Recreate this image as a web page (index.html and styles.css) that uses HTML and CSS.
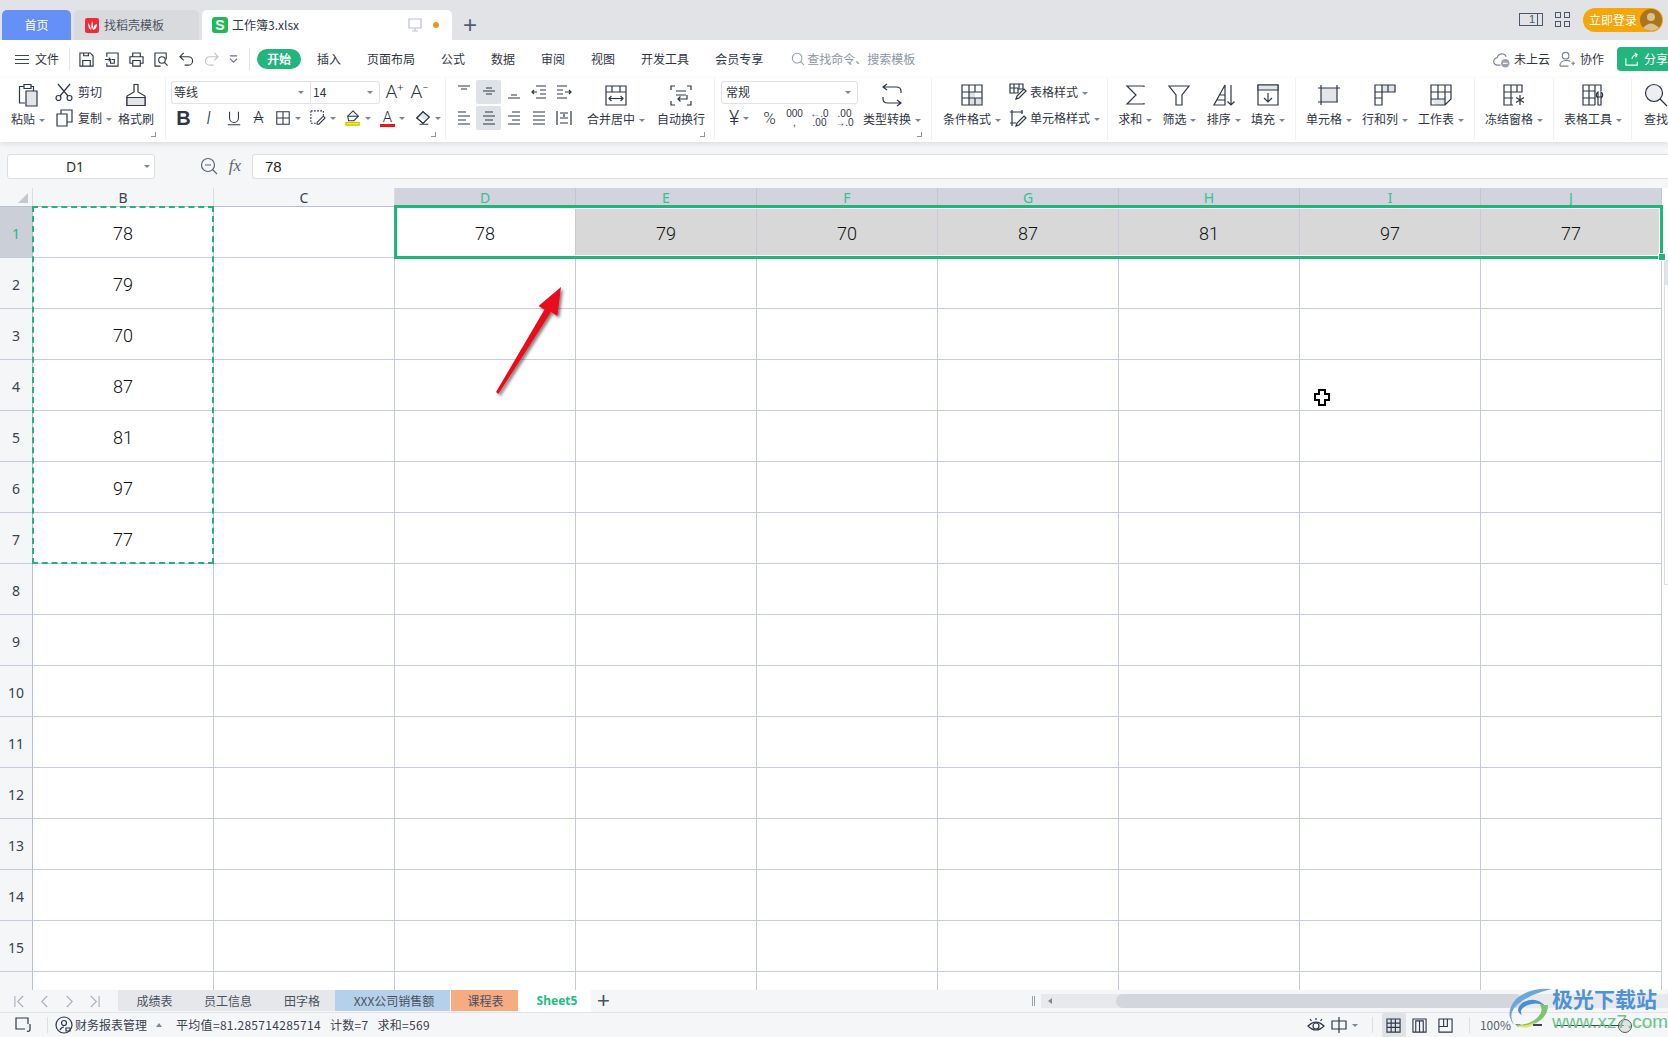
FILE: index.html
```html
<!DOCTYPE html>
<html lang="zh-CN">
<head>
<meta charset="utf-8">
<title>工作簿3.xlsx</title>
<link rel="stylesheet" href="styles.css">
</head>
<body>
<svg class="sprite" aria-hidden="true">
  <symbol id="save" viewBox="0 0 16 16"><path d="M1 1h11l3 3v11H1z"/><path d="M4 15V9h8v6M5 1v3h5V1"/></symbol>
  <symbol id="saveas" viewBox="0 0 16 16"><path d="M3 5V1h12v14H3v-3"/><path d="M1 8h6M5 6l2 2-2 2"/><path d="M8 8h3v4H7V9"/></symbol>
  <symbol id="print" viewBox="0 0 16 16"><path d="M4 5V1h8v4M4 12H1V5h14v7h-3"/><path d="M4 9h8v6H4z"/></symbol>
  <symbol id="preview" viewBox="0 0 16 16"><path d="M7 15H1V1h12v7"/><circle cx="8.5" cy="8.5" r="3.5"/><path d="M11 11l3.5 3.5"/></symbol>
  <symbol id="undo" viewBox="0 0 16 16"><path d="M5 1L1 5l4 4M1 5h9a4.500 4.500 0 0 1 0 9H6"/></symbol>
  <symbol id="redo" viewBox="0 0 16 16"><path d="M11 1l4 4-4 4M15 5H6a4.500 4.500 0 0 0 0 9h4"/></symbol>
  <symbol id="chev" viewBox="0 0 10 10"><path d="M1 1h8M1 4l4 4 4-4"/></symbol>
  <symbol id="paste" viewBox="0 0 24 24"><path d="M8 3.500H3.500V20H9M15 3.500h2.500V8"/><path d="M8 1.500h7v4H8z"/><path d="M10 8h11v15H10z" fill="#e3e5e8"/></symbol>
  <symbol id="cut" viewBox="0 0 18 18"><circle cx="3.500" cy="15" r="2.500"/><circle cx="14.500" cy="15" r="2.500"/><path d="M5 13L15 1M13 13L3 1"/></symbol>
  <symbol id="copy" viewBox="0 0 18 18"><path d="M6 5V1h11v12h-5"/><path d="M2 5h10v12H2z"/></symbol>
  <symbol id="brush" viewBox="0 0 24 24"><path d="M10 1.500h4V9l7 4v9.500H3V13l7-4z"/><path d="M3 14.500h18v8H3z" fill="#e3e5e8"/></symbol>
  <symbol id="under" viewBox="0 0 18 18"><path d="M4 2v7a5 5 0 0 0 10 0V2M2 16.500h14"/></symbol>
  <symbol id="border" viewBox="0 0 18 18"><path d="M2 2h14v14H2zM9 2v14M2 9h14"/></symbol>
  <symbol id="cellfmt" viewBox="0 0 18 18"><path d="M1 1h14v6M1 1v14h7" stroke-dasharray="2 1.500"/><path d="M8 14l7-7 2 2-7 7H8z"/></symbol>
  <symbol id="bucket" viewBox="0 0 18 18"><path d="M9 1l6 6-5 5H4L3 7z" /><path d="M3 7h12"/><path d="M1 14h15v3H1z" fill="#fff200" stroke="#c8c000"/></symbol>
  <symbol id="eraser" viewBox="0 0 18 18"><path d="M9 2l7 6-7 7-7-6z" fill="#fff"/><path d="M2 9l7-7 7 6-4 4-7-7" fill="#e3e5e8" stroke="none"/><path d="M9 2l7 6-7 7-7-6zM5 16h10"/></symbol>
  <symbol id="a1" viewBox="0 0 16 16"><path d="M2 2h12M5 5h6"/></symbol>
  <symbol id="a2" viewBox="0 0 16 16"><path d="M2 7h12M5 10h6M5 4h6"/></symbol>
  <symbol id="a3" viewBox="0 0 16 16"><path d="M5 11h6M2 14h12"/></symbol>
  <symbol id="a4" viewBox="0 0 16 16"><path d="M5 2h10M9 6h6M9 10h6M5 14h10M1 8h5M3 6L1 8l2 2"/></symbol>
  <symbol id="a5" viewBox="0 0 16 16"><path d="M1 2h10M1 6h6M1 10h6M1 14h10M9 8h6M13 6l2 2-2 2"/></symbol>
  <symbol id="b1" viewBox="0 0 16 16"><path d="M2 2h8M2 6h12M2 10h8M2 14h12"/></symbol>
  <symbol id="b2" viewBox="0 0 16 16"><path d="M4 2h8M2 6h12M4 10h8M2 14h12"/></symbol>
  <symbol id="b3" viewBox="0 0 16 16"><path d="M6 2h8M2 6h12M6 10h8M2 14h12"/></symbol>
  <symbol id="b4" viewBox="0 0 16 16"><path d="M2 2h12M2 6h12M2 10h12M2 14h12"/></symbol>
  <symbol id="b5" viewBox="0 0 16 16"><path d="M1 1v14M15 1v14M4 3h8M4 8h8M4 13h8M8 4v3"/></symbol>
  <symbol id="merge" viewBox="0 0 24 24"><path d="M2 3h20v19H2zM2 9h20M8 3v6M16 3v6"/><path d="M5 15.500h14M7.500 13L5 15.500 7.500 18M16.500 13l2.500 2.500-2.500 2.500"/></symbol>
  <symbol id="wrap" viewBox="0 0 24 24"><path d="M6 3H2v4M18 3h4v4M2 18v4h4M22 18v4h-4M7 8h10M7 12h10M18 12v4H9M11.500 13.500L9 16l2.500 2.500"/></symbol>
  <symbol id="convert" viewBox="0 0 24 24"><path d="M7 1L3 4l4 3M3 4h13q5 0 5 4v2M17 17l4 3-4 3M21 20H8q-5 0-5-4v-2"/></symbol>
  <symbol id="cond" viewBox="0 0 24 24"><path d="M9 9h6v6h6v7H9z" fill="#dfe1e5" stroke="none"/><path d="M2 2h20v20H2zM2 9h7V2M9 9v13M2 15h20M15 2v7M9 9h13M15 15v7"/></symbol>
  <symbol id="tstyle" viewBox="0 0 18 18"><path d="M1 1h13v5H9v4H1zM5 1v9M10 1v5M1 5h8"/><path d="M7 16l1-3 7-7 2 2-7 7z"/></symbol>
  <symbol id="cstyle" viewBox="0 0 18 18"><path d="M1 3h13M3 1v16M1 14h6M13 1v4"/><path d="M7 17l1-3 7-7 2 2-7 7z"/></symbol>
  <symbol id="sum" viewBox="0 0 24 24"><path d="M21 4V3H4l9 9-9 9h17v-1"/></symbol>
  <symbol id="filter" viewBox="0 0 24 24"><path d="M2 3h20l-7 9v10H9V12z"/></symbol>
  <symbol id="sort" viewBox="0 0 24 24"><path d="M13 2L2 22h11zM5 17h8M8 12h5M19 2v20M15.500 18.500L19 22l3.500-3.500"/></symbol>
  <symbol id="fillico" viewBox="0 0 24 24"><path d="M2 2h20v20H2z"/><path d="M2 2h20v5H2z" fill="#e3e5e8"/><path d="M12 10v9M8 15l4 4 4-4"/></symbol>
  <symbol id="cell" viewBox="0 0 24 24"><path d="M4 5h16v14H4z" fill="#e3e5e8" stroke="none"/><path d="M1 5h22M1 19h20M4 2v20M20 2v17"/></symbol>
  <symbol id="rowcol" viewBox="0 0 24 24"><path d="M8 2h7v7H8z" fill="#e3e5e8" stroke="none"/><path d="M15 2h7v7h-7z" fill="#e3e5e8" stroke="none"/><path d="M2 2h20v7H9v13H2zM2 9h7M9 2v7M15 2v7M2 15h7"/></symbol>
  <symbol id="sheeticon" viewBox="0 0 24 24"><path d="M2 16h14v6H7z" fill="#e3e5e8" stroke="none"/><path d="M2 2h20v14l-6 6H2zM2 9h20M2 16h14v6M9 2v14M16 2v14"/></symbol>
  <symbol id="freeze" viewBox="0 0 24 24"><path d="M2 2h18v7H2zM2 9v13h9M2 15h9M9 2v20M15 2v7M2 9h7v6H2z"/><path d="M18 12v10M14 14.500l8 5M22 14.500l-8 5"/></symbol>
  <symbol id="ttools" viewBox="0 0 24 24"><path d="M14 22H2V2h18v6M2 8h12M2 15h12M8 2v20M14 2v20"/><path d="M17 9v5h3V9a3.500 3.500 0 0 1 0 6v7h-3v-7a3.500 3.500 0 0 1 0-6z"/></symbol>
  <symbol id="find" viewBox="0 0 24 24"><circle cx="10" cy="10" r="8.500" fill="#eceef1"/><path d="M16 16l7 7"/></symbol>
  <symbol id="glass" viewBox="0 0 16 16"><circle cx="7" cy="7" r="5.500"/><path d="M11 11l4 4"/></symbol>
  <symbol id="zoomout" viewBox="0 0 18 18"><circle cx="8" cy="8" r="6.500"/><path d="M5 8h6M12.500 12.500L17 17"/></symbol>
  <symbol id="monitor" viewBox="0 0 14 14"><path d="M1 1h12v9H1zM7 10v3M4 13h6"/></symbol>
  <symbol id="cloud" viewBox="0 0 18 18"><path d="M8 15H5a4 4 0 0 1-.5-8A5 5 0 0 1 14 6"/><circle cx="13" cy="13" r="4.500" fill="#9aa2b1" stroke="none"/><path d="M10.500 13h5" stroke="#fff"/></symbol>
  <symbol id="person" viewBox="0 0 18 18"><circle cx="7" cy="5" r="3.500"/><path d="M1 16c0-4 3-6 6-6h2c1 0 2 .5 3 1M1 16h9M13 13h4M15 11v4"/></symbol>
  <symbol id="share" viewBox="0 0 16 16"><path d="M1 7v8h13v-4M8 8c0-3 3-5 6-5M11 1l3 2-2 3"/></symbol>
  <symbol id="first" viewBox="0 0 12 14"><path d="M1 1v12M10 1L4 7l6 6"/></symbol>
  <symbol id="prev" viewBox="0 0 12 14"><path d="M9 1L3 7l6 6"/></symbol>
  <symbol id="next" viewBox="0 0 12 14"><path d="M3 1l6 6-6 6"/></symbol>
  <symbol id="last" viewBox="0 0 12 14"><path d="M11 1v12M2 1l6 6-6 6"/></symbol>
  <symbol id="screen" viewBox="0 0 18 18"><path d="M10 13H1V2h12v6M15 8v6a2 2 0 0 1-3 1"/></symbol>
  <symbol id="finance" viewBox="0 0 18 18"><circle cx="9" cy="9" r="8"/><circle cx="9" cy="7" r="2.500"/><path d="M5 14c1-2 3-3 4-3M11 12h4v3h-4z"/></symbol>
  <symbol id="eye" viewBox="0 0 18 18"><path d="M1 10q8-8 16 0-8 8-16 0z"/><circle cx="9" cy="10" r="3"/><path d="M9 2v2M3 3l1.500 2M15 3l-1.500 2"/></symbol>
  <symbol id="ime" viewBox="0 0 18 18"><path d="M2 5h14v8H2zM9 1v16"/></symbol>
  <symbol id="vnorm" viewBox="0 0 16 16"><path d="M1 1h14v14H1zM1 5.500h14M1 10h14M5.500 1v14M10 1v14"/></symbol>
  <symbol id="vpage" viewBox="0 0 16 16"><path d="M1 1h14v14H1zM4 3h8v12H4zM8 3v12"/></symbol>
  <symbol id="vbreak" viewBox="0 0 16 16"><path d="M1 1h14v14H1zM6 1v8H1M6 9h4V1"/></symbol>
</svg>

<header class="tabs">
  <div class="tab tab-home">首页</div>
  <div class="tab tab-tpl">
    <svg class="logo-tpl" viewBox="0 0 14 15"><rect width="14" height="15" rx="2" fill="#ef2b3a"/><path d="M3 5q0 5 2.500 7Q6.500 9 3 5zM7 3q-1.500 5 0 9 2-4 0-9zM12 6q-4 1-4 6 4-1 4-6z" fill="#fff"/></svg>
    <span>找稻壳模板</span>
  </div>
  <div class="tab tab-doc">
    <span class="logo-s">S</span>
    <span class="doc-name">工作簿3.xlsx</span>
    <svg class="monitor"><use href="#monitor"/></svg>
    <i class="dot"></i>
  </div>
  <div class="tab-add">+</div>
  <div class="tabs-right">
    <div class="page-ico"><span>1</span><i></i></div>
    <div class="grid-ico"><i></i><i></i><i></i><i></i></div>
    <div class="login"><span>立即登录</span><svg class="avatar" viewBox="0 0 22 22"><circle cx="11" cy="11" r="11" fill="#a8761e"/><circle cx="11" cy="8" r="4" fill="#dcc08f"/><path d="M3 19q8-9 16 0-8 6-16 0z" fill="#dcc08f"/></svg></div>
  </div>
</header>

<nav class="quick">
  <div class="menu-ico"><i></i><i></i><i></i></div>
  <span class="file">文件</span>
  <i class="qsep"></i>
  <div class="qicons">
    <svg class="q"><use href="#save"/></svg>
    <svg class="q"><use href="#saveas"/></svg>
    <svg class="q"><use href="#print"/></svg>
    <svg class="q"><use href="#preview"/></svg>
    <svg class="q"><use href="#undo"/></svg>
    <svg class="q q-off"><use href="#redo"/></svg>
    <svg class="q q-chev"><use href="#chev"/></svg>
  </div>
  <i class="qsep qsep2"></i>
  <span class="pill">开始</span>
  <div class="menu">
    <span>插入</span><span>页面布局</span><span>公式</span><span>数据</span><span>审阅</span><span>视图</span><span>开发工具</span><span>会员专享</span>
  </div>
  <div class="search"><svg class="glass"><use href="#glass"/></svg><span>查找命令、搜索模板</span></div>
  <div class="quick-right">
    <svg class="qr"><use href="#cloud"/></svg><span class="qr-t1">未上云</span>
    <svg class="qr qr2"><use href="#person"/></svg><span class="qr-t2">协作</span>
    <div class="share"><svg class="share-ico"><use href="#share"/></svg><span>分享</span></div>
  </div>
</nav>

<section class="ribbon">
  <div class="group g-clip">
    <div class="big w-paste"><svg class="ico"><use href="#paste"/></svg><span>粘贴<i class="caret"></i></span></div>
    <div class="stack w-clip">
      <div class="small"><svg class="ico18"><use href="#cut"/></svg><span>剪切</span></div>
      <div class="small"><svg class="ico18"><use href="#copy"/></svg><span>复制<i class="caret"></i></span></div>
    </div>
    <div class="big w-brush"><svg class="ico"><use href="#brush"/></svg><span>格式刷</span></div>
    <i class="corner"></i>
  </div>

  <div class="group g-font">
    <div class="stack">
      <div class="row">
        <div class="combo combo-font"><span>等线</span><i class="caret"></i></div>
        <div class="combo combo-size"><span>14</span><i class="caret"></i></div>
        <div class="cell25 glyph">A<sup>+</sup></div>
        <div class="cell25 glyph">A<sup>−</sup></div>
      </div>
      <div class="row row2">
        <div class="cell25 bold">B</div>
        <div class="cell25 ital">I</div>
        <div class="cell25"><svg class="ico16"><use href="#under"/></svg></div>
        <div class="cell25 strike">A</div>
        <div class="cell35"><svg class="ico16"><use href="#border"/></svg><i class="caret"></i></div>
        <div class="cell35"><svg class="ico16"><use href="#cellfmt"/></svg><i class="caret"></i></div>
        <div class="cell35"><svg class="ico16"><use href="#bucket"/></svg><i class="caret"></i></div>
        <div class="cell35"><span class="color-a">A</span><i class="caret"></i></div>
        <div class="cell35"><svg class="ico16"><use href="#eraser"/></svg><i class="caret"></i></div>
      </div>
    </div>
    <i class="corner"></i>
  </div>

  <div class="group g-align">
    <div class="align-grid">
      <div class="cell25"><svg class="ico16"><use href="#a1"/></svg></div>
      <div class="cell25 on"><svg class="ico16"><use href="#a2"/></svg></div>
      <div class="cell25"><svg class="ico16"><use href="#a3"/></svg></div>
      <div class="cell25"><svg class="ico16"><use href="#a4"/></svg></div>
      <div class="cell25"><svg class="ico16"><use href="#a5"/></svg></div>
      <div class="cell25"><svg class="ico16"><use href="#b1"/></svg></div>
      <div class="cell25 on"><svg class="ico16"><use href="#b2"/></svg></div>
      <div class="cell25"><svg class="ico16"><use href="#b3"/></svg></div>
      <div class="cell25"><svg class="ico16"><use href="#b4"/></svg></div>
      <div class="cell25"><svg class="ico16"><use href="#b5"/></svg></div>
    </div>
    <div class="big w-merge"><svg class="ico"><use href="#merge"/></svg><span>合并居中<i class="caret"></i></span></div>
    <div class="big w-wrap"><svg class="ico"><use href="#wrap"/></svg><span>自动换行</span></div>
    <i class="corner"></i>
  </div>

  <div class="group g-num">
    <div class="stack">
      <div class="row"><div class="combo combo-num"><span>常规</span><i class="caret"></i></div></div>
      <div class="row row2">
        <div class="cell36"><span class="yen">¥</span><i class="caret"></i></div>
        <div class="cell25 pct">%</div>
        <div class="cell25 tiny">000<br>,</div>
        <div class="cell25 tiny">←.0<br>.00</div>
        <div class="cell25 tiny">.00<br>→.0</div>
      </div>
    </div>
    <div class="big w-conv"><svg class="ico"><use href="#convert"/></svg><span>类型转换<i class="caret"></i></span></div>
    <i class="corner"></i>
  </div>

  <div class="group g-style">
    <div class="big w-cond"><svg class="ico"><use href="#cond"/></svg><span>条件格式<i class="caret"></i></span></div>
    <div class="stack">
      <div class="small small-style"><svg class="ico18"><use href="#tstyle"/></svg><span>表格样式<i class="caret"></i></span></div>
      <div class="small small-style"><svg class="ico18"><use href="#cstyle"/></svg><span>单元格样式<i class="caret"></i></span></div>
    </div>
  </div>

  <div class="group g-edit">
    <div class="big w-edit"><svg class="ico"><use href="#sum"/></svg><span>求和<i class="caret"></i></span></div>
    <div class="big w-edit"><svg class="ico"><use href="#filter"/></svg><span>筛选<i class="caret"></i></span></div>
    <div class="big w-edit"><svg class="ico"><use href="#sort"/></svg><span>排序<i class="caret"></i></span></div>
    <div class="big w-edit"><svg class="ico"><use href="#fillico"/></svg><span>填充<i class="caret"></i></span></div>
  </div>

  <div class="group g-cells">
    <div class="big w-cells"><svg class="ico"><use href="#cell"/></svg><span>单元格<i class="caret"></i></span></div>
    <div class="big w-cells"><svg class="ico"><use href="#rowcol"/></svg><span>行和列<i class="caret"></i></span></div>
    <div class="big w-cells"><svg class="ico"><use href="#sheeticon"/></svg><span>工作表<i class="caret"></i></span></div>
  </div>

  <div class="group g-freeze"><div class="big w-wide"><svg class="ico"><use href="#freeze"/></svg><span>冻结窗格<i class="caret"></i></span></div></div>
  <div class="group g-tools"><div class="big w-wide"><svg class="ico"><use href="#ttools"/></svg><span>表格工具<i class="caret"></i></span></div></div>
  <div class="group g-find"><div class="big w-find"><svg class="ico"><use href="#find"/></svg><span>查找</span></div></div>
</section>

<section class="formula">
  <div class="namebox"><span>D1</span><i class="caret"></i></div>
  <svg class="fz"><use href="#zoomout"/></svg>
  <span class="fx">fx</span>
  <div class="input">78</div>
</section>

<main class="sheet">
  <table class="table">
    <colgroup><col class="col-h"><col class="col-c"><col class="col-c"><col class="col-c"><col class="col-c"><col class="col-c"><col class="col-c"><col class="col-c"><col class="col-c"><col class="col-c"></colgroup>
    <thead>
      <tr><th class="corner-h"><i class="tri"></i></th><th>B</th><th>C</th><th class="hl">D</th><th class="hl">E</th><th class="hl">F</th><th class="hl">G</th><th class="hl">H</th><th class="hl">I</th><th class="hl">J</th></tr>
    </thead>
    <tbody>
      <tr><th class="hl-row">1</th><td>78</td><td></td><td>78</td><td class="sel">79</td><td class="sel">70</td><td class="sel">87</td><td class="sel">81</td><td class="sel">97</td><td class="sel">77</td></tr>
      <tr><th>2</th><td>79</td><td></td><td></td><td></td><td></td><td></td><td></td><td></td><td></td></tr>
      <tr><th>3</th><td>70</td><td></td><td></td><td></td><td></td><td></td><td></td><td></td><td></td></tr>
      <tr><th>4</th><td>87</td><td></td><td></td><td></td><td></td><td></td><td></td><td></td><td></td></tr>
      <tr><th>5</th><td>81</td><td></td><td></td><td></td><td></td><td></td><td></td><td></td><td></td></tr>
      <tr><th>6</th><td>97</td><td></td><td></td><td></td><td></td><td></td><td></td><td></td><td></td></tr>
      <tr><th>7</th><td>77</td><td></td><td></td><td></td><td></td><td></td><td></td><td></td><td></td></tr>
      <tr><th>8</th><td></td><td></td><td></td><td></td><td></td><td></td><td></td><td></td><td></td></tr>
      <tr><th>9</th><td></td><td></td><td></td><td></td><td></td><td></td><td></td><td></td><td></td></tr>
      <tr><th>10</th><td></td><td></td><td></td><td></td><td></td><td></td><td></td><td></td><td></td></tr>
      <tr><th>11</th><td></td><td></td><td></td><td></td><td></td><td></td><td></td><td></td><td></td></tr>
      <tr><th>12</th><td></td><td></td><td></td><td></td><td></td><td></td><td></td><td></td><td></td></tr>
      <tr><th>13</th><td></td><td></td><td></td><td></td><td></td><td></td><td></td><td></td><td></td></tr>
      <tr><th>14</th><td></td><td></td><td></td><td></td><td></td><td></td><td></td><td></td><td></td></tr>
      <tr><th>15</th><td></td><td></td><td></td><td></td><td></td><td></td><td></td><td></td><td></td></tr>
      <tr><th></th><td></td><td></td><td></td><td></td><td></td><td></td><td></td><td></td><td></td></tr>
    </tbody>
  </table>
  <div class="vbar"><i></i></div>
  <div class="copy-range"></div>
  <div class="select-range"><i class="handle"></i></div>
  <svg class="arrow" viewBox="0 0 90 130">
    <defs><filter id="sh" x="-30%" y="-30%" width="160%" height="160%"><feDropShadow dx="2" dy="2" stdDeviation="1.500" flood-color="#000" flood-opacity=".5"/></filter></defs>
    <path d="M6 113L8.500 115 61 33 67.500 37 71 8 48.500 27 54.500 30.500z" fill="#e8101a" filter="url(#sh)"/>
  </svg>
  <svg class="cursor" viewBox="0 0 16 17"><path d="M5 1h6v4h4v6h-4v5H5v-5H1V5h4z" fill="#fff" stroke="#000" stroke-width="2"/></svg>
</main>

<section class="sheets">
  <div class="nav">
    <svg class="nav-i"><use href="#first"/></svg>
    <svg class="nav-i"><use href="#prev"/></svg>
    <svg class="nav-i"><use href="#next"/></svg>
    <svg class="nav-i"><use href="#last"/></svg>
  </div>
  <div class="st st1">成绩表</div>
  <div class="st st2">员工信息</div>
  <div class="st st3">田字格</div>
  <div class="st st4">XXX公司销售额</div>
  <div class="st st5">课程表</div>
  <div class="st st6">Sheet5</div>
  <div class="st-add">+</div>
  <div class="splitter"></div>
  <div class="hbar"><i class="harrow"></i><i class="hthumb"></i></div>
</section>

<footer class="status">
  <svg class="s-ico s-screen"><use href="#screen"/></svg>
  <i class="s-sep"></i>
  <svg class="s-ico s-fin"><use href="#finance"/></svg>
  <span class="s-fin-t">财务报表管理</span>
  <i class="s-up"></i>
  <span class="s-avg">平均值=81.285714285714</span>
  <span class="s-cnt">计数=7</span>
  <span class="s-sum">求和=569</span>
  <div class="s-right">
    <svg class="s-ico"><use href="#eye"/></svg>
    <svg class="s-ico s-ime"><use href="#ime"/></svg><i class="caret"></i>
    <i class="s-sep s-sep2"></i>
    <div class="view on"><svg class="v-ico"><use href="#vnorm"/></svg></div>
    <div class="view"><svg class="v-ico"><use href="#vpage"/></svg></div>
    <div class="view"><svg class="v-ico"><use href="#vbreak"/></svg></div>
    <i class="s-sep s-sep3"></i>
    <span class="s-zoom">100%</span><i class="caret"></i>
    <i class="s-minus"></i>
    <div class="slider"><i></i></div>
  </div>
</footer>

<div class="watermark">
  <svg class="wm-logo" viewBox="0 0 46 42">
    <path d="M44 2Q22 0 8 12 -4 26 6 38 -2 24 14 14 26 6 44 2z" fill="#6aa8dc"/>
    <path d="M38 20Q28 8 14 16 6 24 14 28 10 22 20 18 30 14 38 20z" fill="#4a8fcf"/>
    <path d="M40 18Q40 30 28 36 18 42 8 38 22 38 30 30 36 24 32 18z" fill="#7dc66f"/>
    <path d="M8 38Q20 40 28 34L22 40Q14 42 8 38z" fill="#e8e46a"/>
  </svg>
  <div class="wm-text"><b>极光下载站</b><span>www.xz7.com</span></div>
</div>
</body>
</html>
```

FILE: styles.css
```css
* { box-sizing: border-box; }
html, body { margin: 0; padding: 0; }
body {
  width: 1668px; height: 1037px; overflow: hidden; position: relative;
  background: #f5f6f8; color: #3a4150;
  font: 12px/18px "Noto Sans CJK SC", "Noto Sans", sans-serif;
}
i { font-style: normal; }
.sprite { display: none; }
svg { display: block; flex: none; fill: none; stroke: #2d3748; stroke-width: 1.2; }
.caret {
  display: inline-block; flex: none; width: 0; height: 0; margin-left: 4px; vertical-align: middle;
  border-left: 3px solid transparent; border-right: 3px solid transparent; border-top: 3.5px solid #7f8695;
}

/* window tabs */
.tabs { display: flex; height: 40px; padding: 10px 5px 0 2px; background: #e2e3e7; }
.tab { display: flex; align-items: center; height: 30px; border-radius: 5px 5px 0 0; }
.tab-home { width: 69px; justify-content: center; background: #6590f7; color: #fff; }
.tab-tpl { width: 125px; margin-left: 3px; padding-left: 11px; background: #d9dade; color: #4c5362; }
.logo-tpl { width: 14px; height: 15px; margin-right: 5px; stroke: none; }
.tab-doc { width: 250px; margin-left: 3px; padding-left: 10px; background: #fff; color: #2f3644; }
.logo-s {
  display: flex; align-items: center; justify-content: center; width: 16px; height: 16px; border-radius: 3px;
  background: #21b957; color: #fff; font: bold 14px/16px "Liberation Sans", sans-serif;
}
.doc-name { width: 176px; margin-left: 4px; }
.monitor { width: 14px; height: 14px; stroke: #bcc2cc; }
.dot { width: 6px; height: 6px; margin-left: 11px; border-radius: 50%; background: #ea9a13; }
.tab-add { width: 36px; text-align: center; font: 24px/30px "Liberation Sans", sans-serif; color: #525c70; }
.tabs-right { display: flex; margin-left: auto; margin-top: -2px; align-items: flex-start; }
.page-ico {
  display: flex; justify-content: flex-end; align-items: flex-end; width: 24px; height: 13px; margin-top: 5px;
  border: 1px solid #4d566a; color: #4d566a; font: 11px/11px "Liberation Sans", sans-serif;
}
.page-ico span { margin-right: 2px; }
.page-ico i { width: 6px; height: 13px; margin: -1px -1px -1px 0; border: 1px solid #4d566a; }
.grid-ico { display: grid; grid-template-columns: 6px 6px; gap: 3px; margin: 4px 0 0 12px; }
.grid-ico i { height: 6px; border: 1px solid #4d566a; }
.login {
  display: flex; align-items: center; width: 80px; height: 24px; margin: 0 0 0 13px; padding: 0 1px 0 6px;
  border-radius: 12px; background: #f5a60b; color: #fff;
}
.avatar { width: 22px; height: 22px; margin-left: auto; stroke: none; }

/* quick bar */
.quick { display: flex; align-items: center; height: 38px; background: #fff; padding-left: 15px; color: #2f3644; }
.menu-ico { display: grid; gap: 3px; width: 14px; }
.menu-ico i { height: 1px; background: #3f4859; }
.file { margin-left: 6px; }
.qsep { width: 1px; height: 22px; margin-left: 10px; background: #e1e3e8; }
.qicons { display: flex; gap: 10px; margin-left: 9px; align-items: center; }
.q { width: 15px; height: 15px; }
.q-off { stroke: #bfc3ca; }
.q-chev { width: 9px; height: 9px; stroke: #6a7282; }
.qsep2 { margin-left: 11px; }
.pill {
  width: 44px; height: 20px; margin-left: 7px; border-radius: 10px; text-align: center; line-height: 20px;
  background: #22b57c; color: #fff; font-weight: 700;
}
.menu { display: flex; gap: 26px; margin-left: 16px; }
.search { display: flex; align-items: center; gap: 2px; margin-left: 28px; color: #8d95a6; }
.glass { width: 14px; height: 14px; stroke: #97a0b0; }
.quick-right { display: flex; align-items: center; margin-left: auto; }
.qr { width: 17px; height: 17px; stroke: #7b8392; }
.qr-t1 { margin-left: 4px; }
.qr2 { margin-left: 9px; }
.qr-t2 { margin-left: 4px; }
.share {
  display: flex; align-items: center; width: 51px; height: 24px; margin-left: 13px; padding-left: 8px;
  border-radius: 4px 0 0 4px; background: #22b57c; color: #fff; overflow: hidden; white-space: nowrap;
}
.share-ico { width: 14px; height: 14px; margin-right: 5px; stroke: #fff; }

/* ribbon */
.ribbon { display: flex; height: 64px; background: #fff; box-shadow: 0 2px 5px rgba(40, 50, 70, .12); position: relative; z-index: 1; color: #2f3644; overflow: hidden; }
.group { display: flex; flex: none; height: 62px; padding-top: 2px; border-right: 1px solid #eef0f2; position: relative; }
.g-clip { width: 166px; padding-left: 6px; }
.g-font { width: 280px; padding-left: 5px; }
.g-align { width: 269px; padding-left: 5px; }
.g-num { width: 217px; padding-left: 6px; }
.g-style { width: 176px; padding-left: 10px; }
.g-edit { width: 188px; padding-left: 5px; }
.g-cells { width: 179px; padding-left: 5px; }
.g-freeze { width: 79px; }
.g-tools { width: 78px; }
.g-find { width: 36px; border-right: 0; }
.big { display: flex; flex-direction: column; align-items: center; flex: none; padding-top: 3px; white-space: nowrap; }
.big > span { margin-top: 3px; }
.ico { width: 24px; height: 24px; }
.ico18 { width: 18px; height: 18px; }
.ico16 { width: 16px; height: 16px; }
.w-paste { width: 44px; }
.w-clip { width: 62px; }
.w-brush { width: 48px; }
.w-merge { width: 60px; margin-left: 10px; }
.w-wrap { width: 60px; margin-left: 5px; }
.w-conv { width: 60px; margin-left: 4px; }
.w-cond { width: 60px; }
.w-edit { width: 44.3px; }
.w-cells { width: 56px; }
.w-wide { width: 78px; }
.w-find { width: 48px; }
.stack { display: flex; flex-direction: column; gap: 2px; }
.small { display: flex; align-items: center; gap: 5px; height: 24px; padding-left: 5px; white-space: nowrap; }
.small-style { padding-left: 0; margin-left: 7px; gap: 3px; }
.row { display: flex; height: 24px; align-items: center; }
.combo {
  display: flex; align-items: center; justify-content: space-between; height: 23px; padding: 0 6px 0 2px;
  border: 1px solid #e0e2e7; background: #fff;
}
.combo-font { width: 139px; border-radius: 3px 0 0 3px; border-right: 0; }
.combo-size { width: 70px; border-radius: 0 3px 3px 0; margin-right: 2px; }
.combo-num { width: 137px; border-radius: 3px; padding: 0 6px 0 4px; }
.cell25 { display: flex; align-items: center; justify-content: center; flex: none; width: 25px; height: 24px; }
.cell35 { display: flex; align-items: center; flex: none; width: 35px; height: 24px; padding-left: 4px; }
.cell36 { display: flex; align-items: center; flex: none; width: 36px; height: 24px; padding-left: 8px; }
.glyph { font: 300 19px/24px Roboto, sans-serif; }
.glyph sup { font-size: 11px; line-height: 10px; margin-top: -8px; }
.bold { font: bold 20px/24px "Liberation Sans", sans-serif; }
.ital { font: italic 300 18px/24px Roboto, sans-serif; }
.strike { font: 300 16px/24px Roboto, sans-serif; text-decoration: line-through; }
.color-a { display: block; width: 15px; text-align: center; font: 300 15px/14px Roboto, sans-serif; border-bottom: 3px solid #f01414; }
.yen { font: 300 20px/24px Roboto, sans-serif; }
.pct { font: 300 17px/24px Roboto, sans-serif; }
.tiny { display: block; padding-top: 3px; text-align: center; font: 10px/9px "Liberation Sans", sans-serif; }
.on { background: #dfe2e6; border-radius: 2px; }
.align-grid { display: grid; grid-template-columns: repeat(5, 25px); grid-auto-rows: 24px; row-gap: 2px; height: 50px; }
.corner { position: absolute; right: 9px; bottom: 3px; width: 5px; height: 5px; border-right: 1px solid #8f96a3; border-bottom: 1px solid #8f96a3; }

/* formula bar */
.formula { display: flex; align-items: center; height: 46px; padding: 2px 0 0 7px; background: #f5f6f8; }
.namebox {
  display: flex; align-items: center; width: 148px; height: 25px; padding-right: 4px; border: 1px solid #dcdee3; border-radius: 3px;
  background: #fff; font: 14px/23px "Noto Sans", sans-serif; color: #333;
}
.namebox span { flex: 1; text-align: center; padding-left: 4px; padding-right: 2px; }
.fz { width: 18px; height: 18px; margin-left: 45px; stroke: #5d6575; }
.fx { width: 34px; text-align: center; font: italic 17px/20px "Liberation Serif", serif; color: #5d6575; }
.input {
  flex: 1; height: 25px; margin-right: -3px; padding-left: 12px; border: 1px solid #dcdee3; border-right: 0; border-radius: 3px 0 0 3px;
  background: #fff; font: 15px/23px "Liberation Sans", sans-serif; color: #222;
}

/* grid */
.sheet { position: relative; height: 802px; overflow: hidden; background: #fff; }
.table { table-layout: fixed; width: 1662px; border-collapse: separate; border-spacing: 0; background: #fff; }
.col-h { width: 33px; }
.col-c { width: 181px; }
.table th { padding: 0; font: 14px/18px "Noto Sans", sans-serif; color: #3a4150; background: #f5f6f8; }
.table thead th { height: 18px; padding-top: 2px; line-height: 16px; border-bottom: 1px solid #b8bfd0; border-right: 1px solid #dadde4; }
.corner-h { position: relative; }
.tri { position: absolute; right: 4px; bottom: 3px; width: 0; height: 0; border-left: 10px solid transparent; border-bottom: 10px solid #c5c8ce; }
.table thead th.hl { background: #d1d4dc; color: #38c08d; border-right-color: #c0c5d2; }
.table tbody th { height: 51px; padding-top: 4px; border-right: 1px solid #b8bfd0; border-bottom: 1px solid #c5cbdb; }
.table tbody th.hl-row { background: #cbcfd7; color: #2ab680; }
.table td {
  height: 51px; padding: 4px 0 0; text-align: center; border-right: 1px solid #c5cbdb; border-bottom: 1px solid #c5cbdb;
  font: 300 18px/20px Roboto, sans-serif; color: #111;
}
.table td.sel { background: #d8d8d8; }
.vbar { position: absolute; top: 70px; right: 0; width: 4px; height: 327px; border-left: 1px solid #dcdfe4; border-bottom: 1px solid #dcdfe4; }
.vbar i { display: block; height: 25px; margin-top: 2px; background: #e1e4e8; }
.copy-range { position: absolute; left: 32px; top: 18px; width: 182px; height: 358px; border: 2px dashed #21b57c; }
.select-range { position: absolute; left: 394px; top: 17px; width: 1269px; height: 54px; border: 3px solid #21b57c; box-shadow: inset 0 0 0 1px #fff; }
.handle { position: absolute; right: -5px; bottom: -4px; width: 6px; height: 6px; background: #21b57c; outline: 1px solid #fff; }
.arrow { position: absolute; left: 490px; top: 91px; width: 90px; height: 130px; stroke: none; }
.cursor { position: absolute; left: 1314px; top: 201px; width: 16px; height: 17px; stroke: none; }

/* sheet tabs */
.sheets { display: flex; height: 22px; background: #f5f6f8; position: relative; z-index: 1; }
.sheets > * { flex: none; }
.nav { display: flex; width: 118px; padding-left: 14px; gap: 14px; align-items: center; }
.nav-i { width: 11px; height: 13px; stroke: #a9afbb; }
.st { height: 21px; text-align: center; line-height: 21px; background: #e6e7eb; color: #4a5160; }
.st1 { width: 73px; }
.st2 { width: 74px; }
.st3 { width: 70px; padding-left: 4px; }
.st4 { width: 115px; margin-right: 1px; padding-left: 3px; background: #b5d0ea; }
.st5 { width: 67px; margin-right: 1px; padding-left: 2px; background: #f4ac80; }
.st6 { width: 72px; height: 22px; padding-left: 4px; background: #fff; color: #1cc07f; font-weight: 700; font-family: "Noto Sans", sans-serif; }
.st-add { width: 24px; padding-left: 1px; text-align: center; font: 22px/22px "Liberation Sans", sans-serif; color: #4a5160; }
.splitter { width: 3px; height: 10px; margin: 6px 0 0 417px; border-left: 1px solid #9aa1af; border-right: 1px solid #9aa1af; }
.hbar { display: flex; align-items: center; width: 627px; height: 14px; margin: 4px 0 0 6px; background: #e8e9ed; }
.harrow { flex: none; width: 0; height: 0; margin-left: 7px; border: 3px solid transparent; border-left: 0; border-right: 4px solid #7f8695; }
.hthumb { flex: none; width: 406px; height: 14px; margin-left: 64px; border-radius: 7px; background: #d3d6dd; }

/* status bar */
.status { display: flex; align-items: center; height: 25px; border-top: 1px solid #e2e4e9; background: #f5f6f8; padding-left: 15px; color: #3a4150; }
.s-ico { width: 18px; height: 18px; }
.s-sep { flex: none; width: 1px; height: 16px; margin-left: 14px; background: #dcdfe4; }
.s-fin { margin-left: 7px; }
.s-fin-t { margin-left: 2px; }
.s-up { margin-left: 9px; width: 0; height: 0; border-left: 3px solid transparent; border-right: 3px solid transparent; border-bottom: 4px solid #7f8695; }
.s-avg { margin-left: 14px; letter-spacing: .3px; }
.s-cnt { margin-left: 9px; letter-spacing: .3px; }
.s-sum { margin-left: 9px; letter-spacing: .3px; }
.s-right { display: flex; align-items: center; height: 24px; margin-left: auto; }
.s-ime { margin-left: 5px; }
.s-sep2 { margin-left: 14px; }
.view { display: flex; align-items: center; justify-content: center; flex: none; width: 24px; height: 24px; margin-left: 2px; }
.view.on { margin-left: 9px; }
.v-ico { width: 15px; height: 15px; }
.s-sep3 { margin-left: 11px; }
.s-zoom { margin-left: 10px; color: #5a6170; }
.s-minus { flex: none; width: 9px; height: 2px; margin-left: 12px; background: #3a4457; }
.slider { flex: none; width: 114px; height: 1px; margin-left: 12px; background: #e0e2e7; position: relative; }
.slider i { display: block; width: 70px; height: 1px; background: #3a4457; }
.slider i::after { content: ""; position: absolute; left: 64px; top: -6px; width: 12px; height: 12px; border: 1px solid #555; border-radius: 50%; background: rgba(210, 210, 210, .5); }

/* watermark */
.watermark { position: absolute; left: 1508px; top: 987px; display: flex; z-index: 3; }
.wm-logo { width: 46px; height: 42px; stroke: none; }
.wm-text { display: flex; flex-direction: column; margin-left: -2px; }
.wm-text b { font: 700 21px/22px "Noto Sans CJK SC", sans-serif; color: #4d93d6; }
.wm-text span { margin-top: 4px; font: 19px/18px "Liberation Sans", sans-serif; color: #6cc58a; }
```
